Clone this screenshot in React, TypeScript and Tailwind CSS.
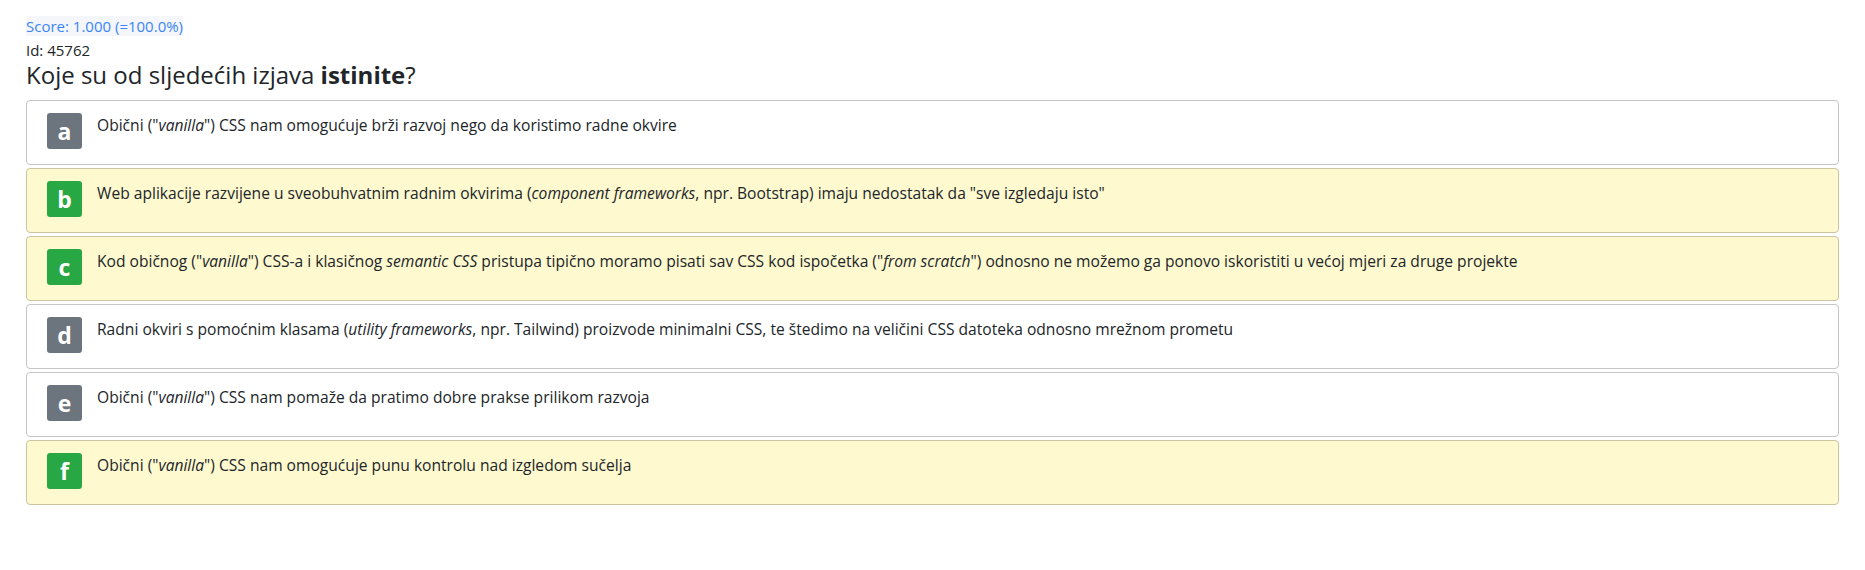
import React from 'react';

type Answer = {
  letter: string;
  correct: boolean;
  text: React.ReactNode;
};

const answers: Answer[] = [
  {
    letter: 'a',
    correct: false,
    text: (
      <>
        Obični ("<i>vanilla</i>") CSS nam omogućuje brži razvoj nego da koristimo radne okvire
      </>
    ),
  },
  {
    letter: 'b',
    correct: true,
    text: (
      <>
        Web aplikacije razvijene u sveobuhvatnim radnim okvirima (<i>component frameworks</i>, npr. Bootstrap) imaju
        nedostatak da "sve izgledaju isto"
      </>
    ),
  },
  {
    letter: 'c',
    correct: true,
    text: (
      <>
        Kod običnog ("<i>vanilla</i>") CSS-a i klasičnog <i>semantic CSS</i> pristupa tipično moramo pisati sav CSS kod
        ispočetka ("<i>from scratch</i>") odnosno ne možemo ga ponovo iskoristiti u većoj mjeri za druge projekte
      </>
    ),
  },
  {
    letter: 'd',
    correct: false,
    text: (
      <>
        Radni okviri s pomoćnim klasama (<i>utility frameworks</i>, npr. Tailwind) proizvode minimalni CSS, te štedimo na
        veličini CSS datoteka odnosno mrežnom prometu
      </>
    ),
  },
  {
    letter: 'e',
    correct: false,
    text: (
      <>
        Obični ("<i>vanilla</i>") CSS nam pomaže da pratimo dobre prakse prilikom razvoja
      </>
    ),
  },
  {
    letter: 'f',
    correct: true,
    text: (
      <>
        Obični ("<i>vanilla</i>") CSS nam omogućuje punu kontrolu nad izgledom sučelja
      </>
    ),
  },
];

function AnswerCard({ answer }: { answer: Answer }) {
  return (
    <div
      className={
        answer.correct
          ? 'mb-[3px] flex h-[65px] items-start gap-[15px] rounded-[4px] border border-[#cbc4a0] bg-[#fef9cf] pl-[20px] pt-[12px]'
          : 'mb-[3px] flex h-[65px] items-start gap-[15px] rounded-[4px] border border-[#c6c6c6] bg-white pl-[20px] pt-[12px]'
      }
    >
      <div
        className={
          answer.correct
            ? 'flex h-[36px] w-[35px] shrink-0 items-center justify-center rounded-[3px] bg-[#28a745] text-[23px] font-bold text-white'
            : 'flex h-[36px] w-[35px] shrink-0 items-center justify-center rounded-[3px] bg-[#6c757d] text-[23px] font-bold text-white'
        }
      >
        {answer.letter}
      </div>
      <div className="text-[15.6px] leading-[24px] text-[#212529]">{answer.text}</div>
    </div>
  );
}

export default function App() {
  return (
    <div className="min-h-screen bg-white px-[26px] pt-[14px] font-['Open_Sans',sans-serif] text-[#212529]">
      <div className="leading-[24px]">
        <span className="bg-[#f4f6fa] text-[15px] text-[#3b86f7]">Score: 1.000 (=100.0%)</span>
      </div>
      <div className="text-[15px] leading-[24px]">Id: 45762</div>
      <h2 className="mb-[12px] text-[24px] leading-[26px]">
        Koje su od sljedećih izjava <b>istinite</b>?
      </h2>
      <div>
        {answers.map((a) => (
          <AnswerCard key={a.letter} answer={a} />
        ))}
      </div>
    </div>
  );
}
